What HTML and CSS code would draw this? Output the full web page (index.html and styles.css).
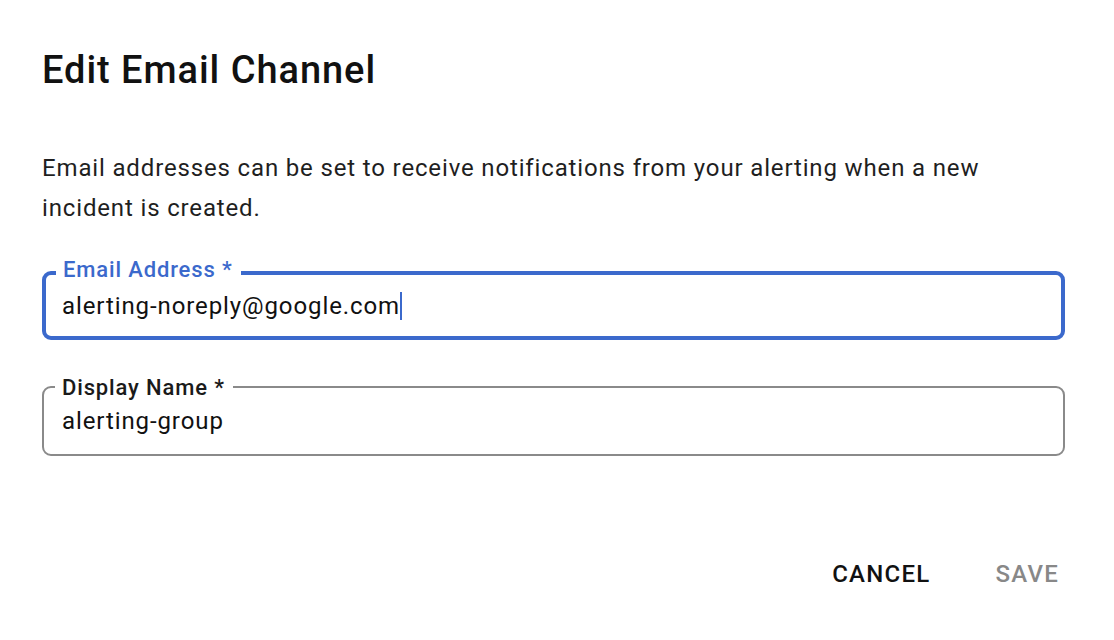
FILE: index.html
```html
<!DOCTYPE html>
<html>
<head>
<meta charset="utf-8">
<link rel="stylesheet" href="styles.css">
</head>
<body>
<div class="dialog">
  <h1 class="title">Edit Email Channel</h1>
  <p class="desc">Email addresses can be set to receive notifications from your alerting when a new incident is created.</p>
  <div class="field focused">
    <span class="label">Email Address *</span>
    <div class="value">alerting-noreply@google.com<span class="caret"></span></div>
  </div>
  <div class="field plain">
    <span class="label">Display Name *</span>
    <div class="value">alerting-group</div>
  </div>
  <div class="actions">
    <button class="btn">CANCEL</button>
    <button class="btn disabled">SAVE</button>
  </div>
</div>
</body>
</html>
```
FILE: styles.css
```css
html, body {
  margin: 0;
  padding: 0;
  background: #fff;
}
body {
  font-family: Roboto, "Liberation Sans", sans-serif;
  color: #202124;
}
.dialog {
  width: 1114px;
  height: 640px;
  box-sizing: border-box;
  padding: 48px 49px 0 42px;
  display: flex;
  flex-direction: column;
}
.title {
  margin: 0;
  font-size: 38px;
  line-height: 44px;
  font-weight: 500;
  letter-spacing: 0.95px;
  color: #111;
}
.desc {
  margin: 56px 0 0 0;
  font-size: 24px;
  line-height: 40px;
  letter-spacing: 0.85px;
  color: #1f1f1f;
  width: 990px;
}
.field {
  position: relative;
  box-sizing: border-box;
  display: flex;
  align-items: center;
  border-radius: 9px;
}
.field.focused {
  margin-top: 43px;
  height: 69px;
  border: 4px solid #3b69cc;
  padding-left: 16px;
}
.field.plain {
  margin-top: 46px;
  height: 70px;
  border: 2px solid #8a8a8a;
  padding-left: 18px;
}
.label {
  position: absolute;
  padding: 0 8px 0 7px;
  background: #fff;
  font-size: 22px;
  line-height: 24px;
  font-weight: 500;
  letter-spacing: 0.85px;
  color: #1a1a1a;
}
.focused .label {
  color: #3b69cc;
  left: 10px;
  top: -17.5px;
}
.plain .label {
  left: 11px;
  top: -12.5px;
}
.value {
  font-size: 24px;
  line-height: 28px;
  letter-spacing: 0.9px;
  color: #111;
  display: flex;
  align-items: center;
}
.caret {
  display: inline-block;
  width: 2px;
  height: 28px;
  background: #3b69cc;
  margin-left: 0;
}
.actions {
  margin-top: auto;
  margin-bottom: 44px;
  margin-right: -10px;
  display: flex;
  justify-content: flex-end;
  gap: 33px;
}
.btn {
  border: none;
  background: none;
  font-family: Roboto, "Liberation Sans", sans-serif;
  font-size: 24px;
  font-weight: 500;
  letter-spacing: 1.25px;
  color: #111;
  padding: 8px 16px;
  line-height: 28px;
}
.btn.disabled {
  color: #888;
}
```
